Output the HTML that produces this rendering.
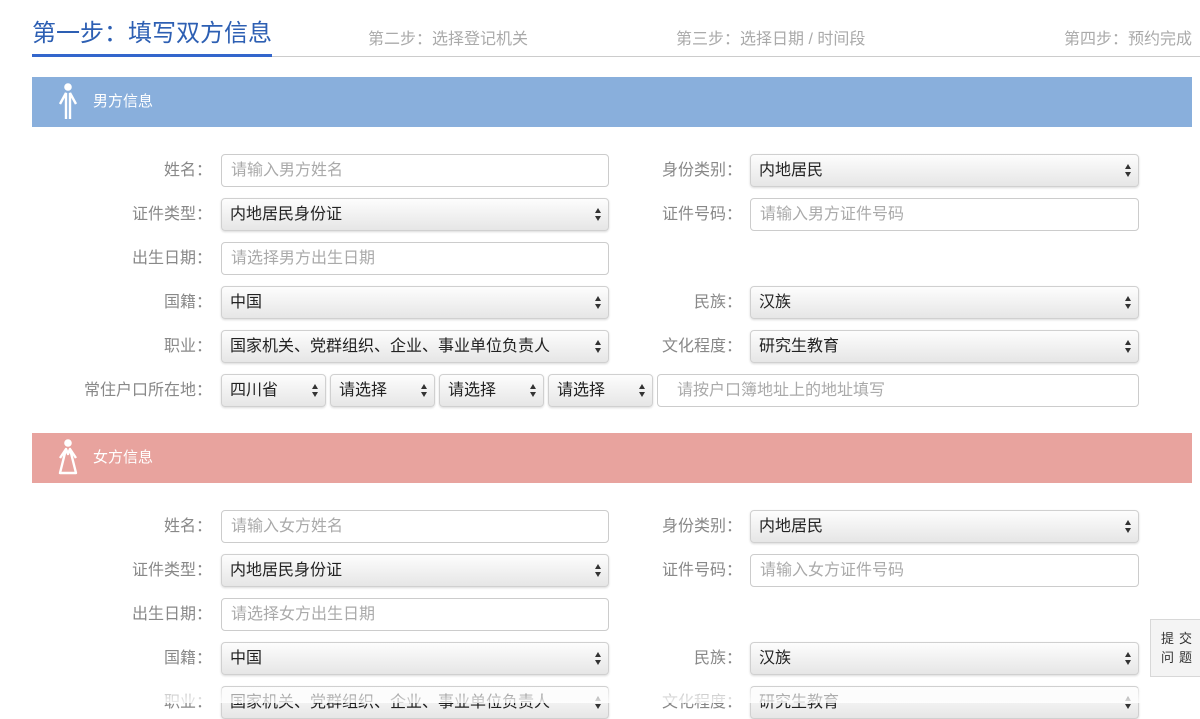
<!DOCTYPE html>
<html><head><meta charset="utf-8"><style>
*{box-sizing:border-box;margin:0;padding:0}
body{width:1200px;height:703px;overflow:hidden;background:#fff;position:relative;font-family:"Liberation Sans","Noto Sans CJK SC",sans-serif;font-size:16px}
.a{position:absolute}
.lb{position:absolute;color:#888;text-align:right;width:200px;line-height:33px;height:33px}
.in{position:absolute;height:33px;border:1px solid #ccc;border-radius:4px;background:#fff;color:#aaa;padding-left:9px;line-height:31px}
.se{position:absolute;height:33px;border:1px solid #d0d0d0;border-radius:4px;background:linear-gradient(#fdfdfd,#e6e6e6);color:#222;padding-left:8px;line-height:31px;box-shadow:0 1px 2px rgba(0,0,0,.15)}
.se:after{content:"";position:absolute;right:7px;top:9px;width:0;height:0;border-left:3.5px solid transparent;border-right:3.5px solid transparent;border-bottom:5px solid #333}
.se:before{content:"";position:absolute;right:7px;top:17px;width:0;height:0;border-left:3.5px solid transparent;border-right:3.5px solid transparent;border-top:5px solid #333}
.hd{position:absolute;left:32px;width:1160px;height:50px;color:#fff;font-size:15px;line-height:50px;padding-left:61px}
</style></head><body>
<div class="a" style="left:32px;top:16px;font-size:24px;color:#2d5fb3;line-height:36px">第一步：填写双方信息</div>
<div class="a" style="left:368px;top:25px;color:#aaa;font-size:16px">第二步：选择登记机关</div>
<div class="a" style="left:676px;top:25px;color:#aaa;font-size:16px">第三步：选择日期 / 时间段</div>
<div class="a" style="left:1064px;top:25px;color:#aaa;font-size:16px;white-space:nowrap">第四步：预约完成</div>
<div class="a" style="left:32px;top:56px;width:1168px;height:1px;background:#ccc"></div>
<div class="a" style="left:32px;top:54px;width:240px;height:3px;background:#3366cc"></div>

<div class="hd" style="top:77px;background:#89afdc">男方信息</div>
<svg class="a" style="left:56px;top:82px" width="24" height="40" viewBox="0 0 24 40"><circle cx="12" cy="5" r="3.8" fill="#fff"/><path d="M4 22 L10 11 L10 37 M20 22 L14 11 L14 37" stroke="#fff" stroke-width="2.4" fill="none"/></svg>
<div class="hd" style="top:433px;background:#e8a39e">女方信息</div>
<svg class="a" style="left:56px;top:438px" width="24" height="40" viewBox="0 0 24 40"><circle cx="12" cy="5" r="3.8" fill="#fff"/><path d="M4 20 L10 11 L4 35 L20 35 L14 11 L20 20 M10 11 L12 16 L14 11" stroke="#fff" stroke-width="2.4" fill="none" stroke-linejoin="round"/></svg>

<!-- male -->
<div class="lb" style="left:12px;top:154px">姓名：</div><div class="in" style="left:221px;top:154px;width:388px">请输入男方姓名</div>
<div class="lb" style="left:542px;top:154px">身份类别：</div><div class="se" style="left:750px;top:154px;width:389px">内地居民</div>
<div class="lb" style="left:12px;top:198px">证件类型：</div><div class="se" style="left:221px;top:198px;width:388px">内地居民身份证</div>
<div class="lb" style="left:542px;top:198px">证件号码：</div><div class="in" style="left:750px;top:198px;width:389px">请输入男方证件号码</div>
<div class="lb" style="left:12px;top:242px">出生日期：</div><div class="in" style="left:221px;top:242px;width:388px">请选择男方出生日期</div>
<div class="lb" style="left:12px;top:286px">国籍：</div><div class="se" style="left:221px;top:286px;width:388px">中国</div>
<div class="lb" style="left:542px;top:286px">民族：</div><div class="se" style="left:750px;top:286px;width:389px">汉族</div>
<div class="lb" style="left:12px;top:330px">职业：</div><div class="se" style="left:221px;top:330px;width:388px">国家机关、党群组织、企业、事业单位负责人</div>
<div class="lb" style="left:542px;top:330px">文化程度：</div><div class="se" style="left:750px;top:330px;width:389px">研究生教育</div>
<div class="lb" style="left:12px;top:374px">常住户口所在地：</div>
<div class="se" style="left:221px;top:374px;width:105px">四川省</div>
<div class="se" style="left:330px;top:374px;width:105px">请选择</div>
<div class="se" style="left:439px;top:374px;width:105px">请选择</div>
<div class="se" style="left:548px;top:374px;width:105px">请选择</div>
<div class="in" style="left:657px;top:374px;width:482px;padding-left:19px">请按户口簿地址上的地址填写</div>

<!-- female -->
<div class="lb" style="left:12px;top:510px">姓名：</div><div class="in" style="left:221px;top:510px;width:388px">请输入女方姓名</div>
<div class="lb" style="left:542px;top:510px">身份类别：</div><div class="se" style="left:750px;top:510px;width:389px">内地居民</div>
<div class="lb" style="left:12px;top:554px">证件类型：</div><div class="se" style="left:221px;top:554px;width:388px">内地居民身份证</div>
<div class="lb" style="left:542px;top:554px">证件号码：</div><div class="in" style="left:750px;top:554px;width:389px">请输入女方证件号码</div>
<div class="lb" style="left:12px;top:598px">出生日期：</div><div class="in" style="left:221px;top:598px;width:388px">请选择女方出生日期</div>
<div class="lb" style="left:12px;top:642px">国籍：</div><div class="se" style="left:221px;top:642px;width:388px">中国</div>
<div class="lb" style="left:542px;top:642px">民族：</div><div class="se" style="left:750px;top:642px;width:389px">汉族</div>
<div class="lb" style="left:12px;top:686px">职业：</div><div class="se" style="left:221px;top:686px;width:388px">国家机关、党群组织、企业、事业单位负责人</div>
<div class="lb" style="left:542px;top:686px">文化程度：</div><div class="se" style="left:750px;top:686px;width:389px">研究生教育</div>

<div class="a" style="left:0;top:688px;width:1200px;height:15px;background:linear-gradient(rgba(255,255,255,.4),rgba(255,255,255,.85))"></div>

<div class="a" style="left:1150px;top:619px;width:52px;height:58px;border:1px solid #d8d8d8;background:#f4f4f4;color:#333;font-size:13px;line-height:19px;padding:9px 0 0 10px;letter-spacing:5px">提交<br>问题</div>
</body></html>
